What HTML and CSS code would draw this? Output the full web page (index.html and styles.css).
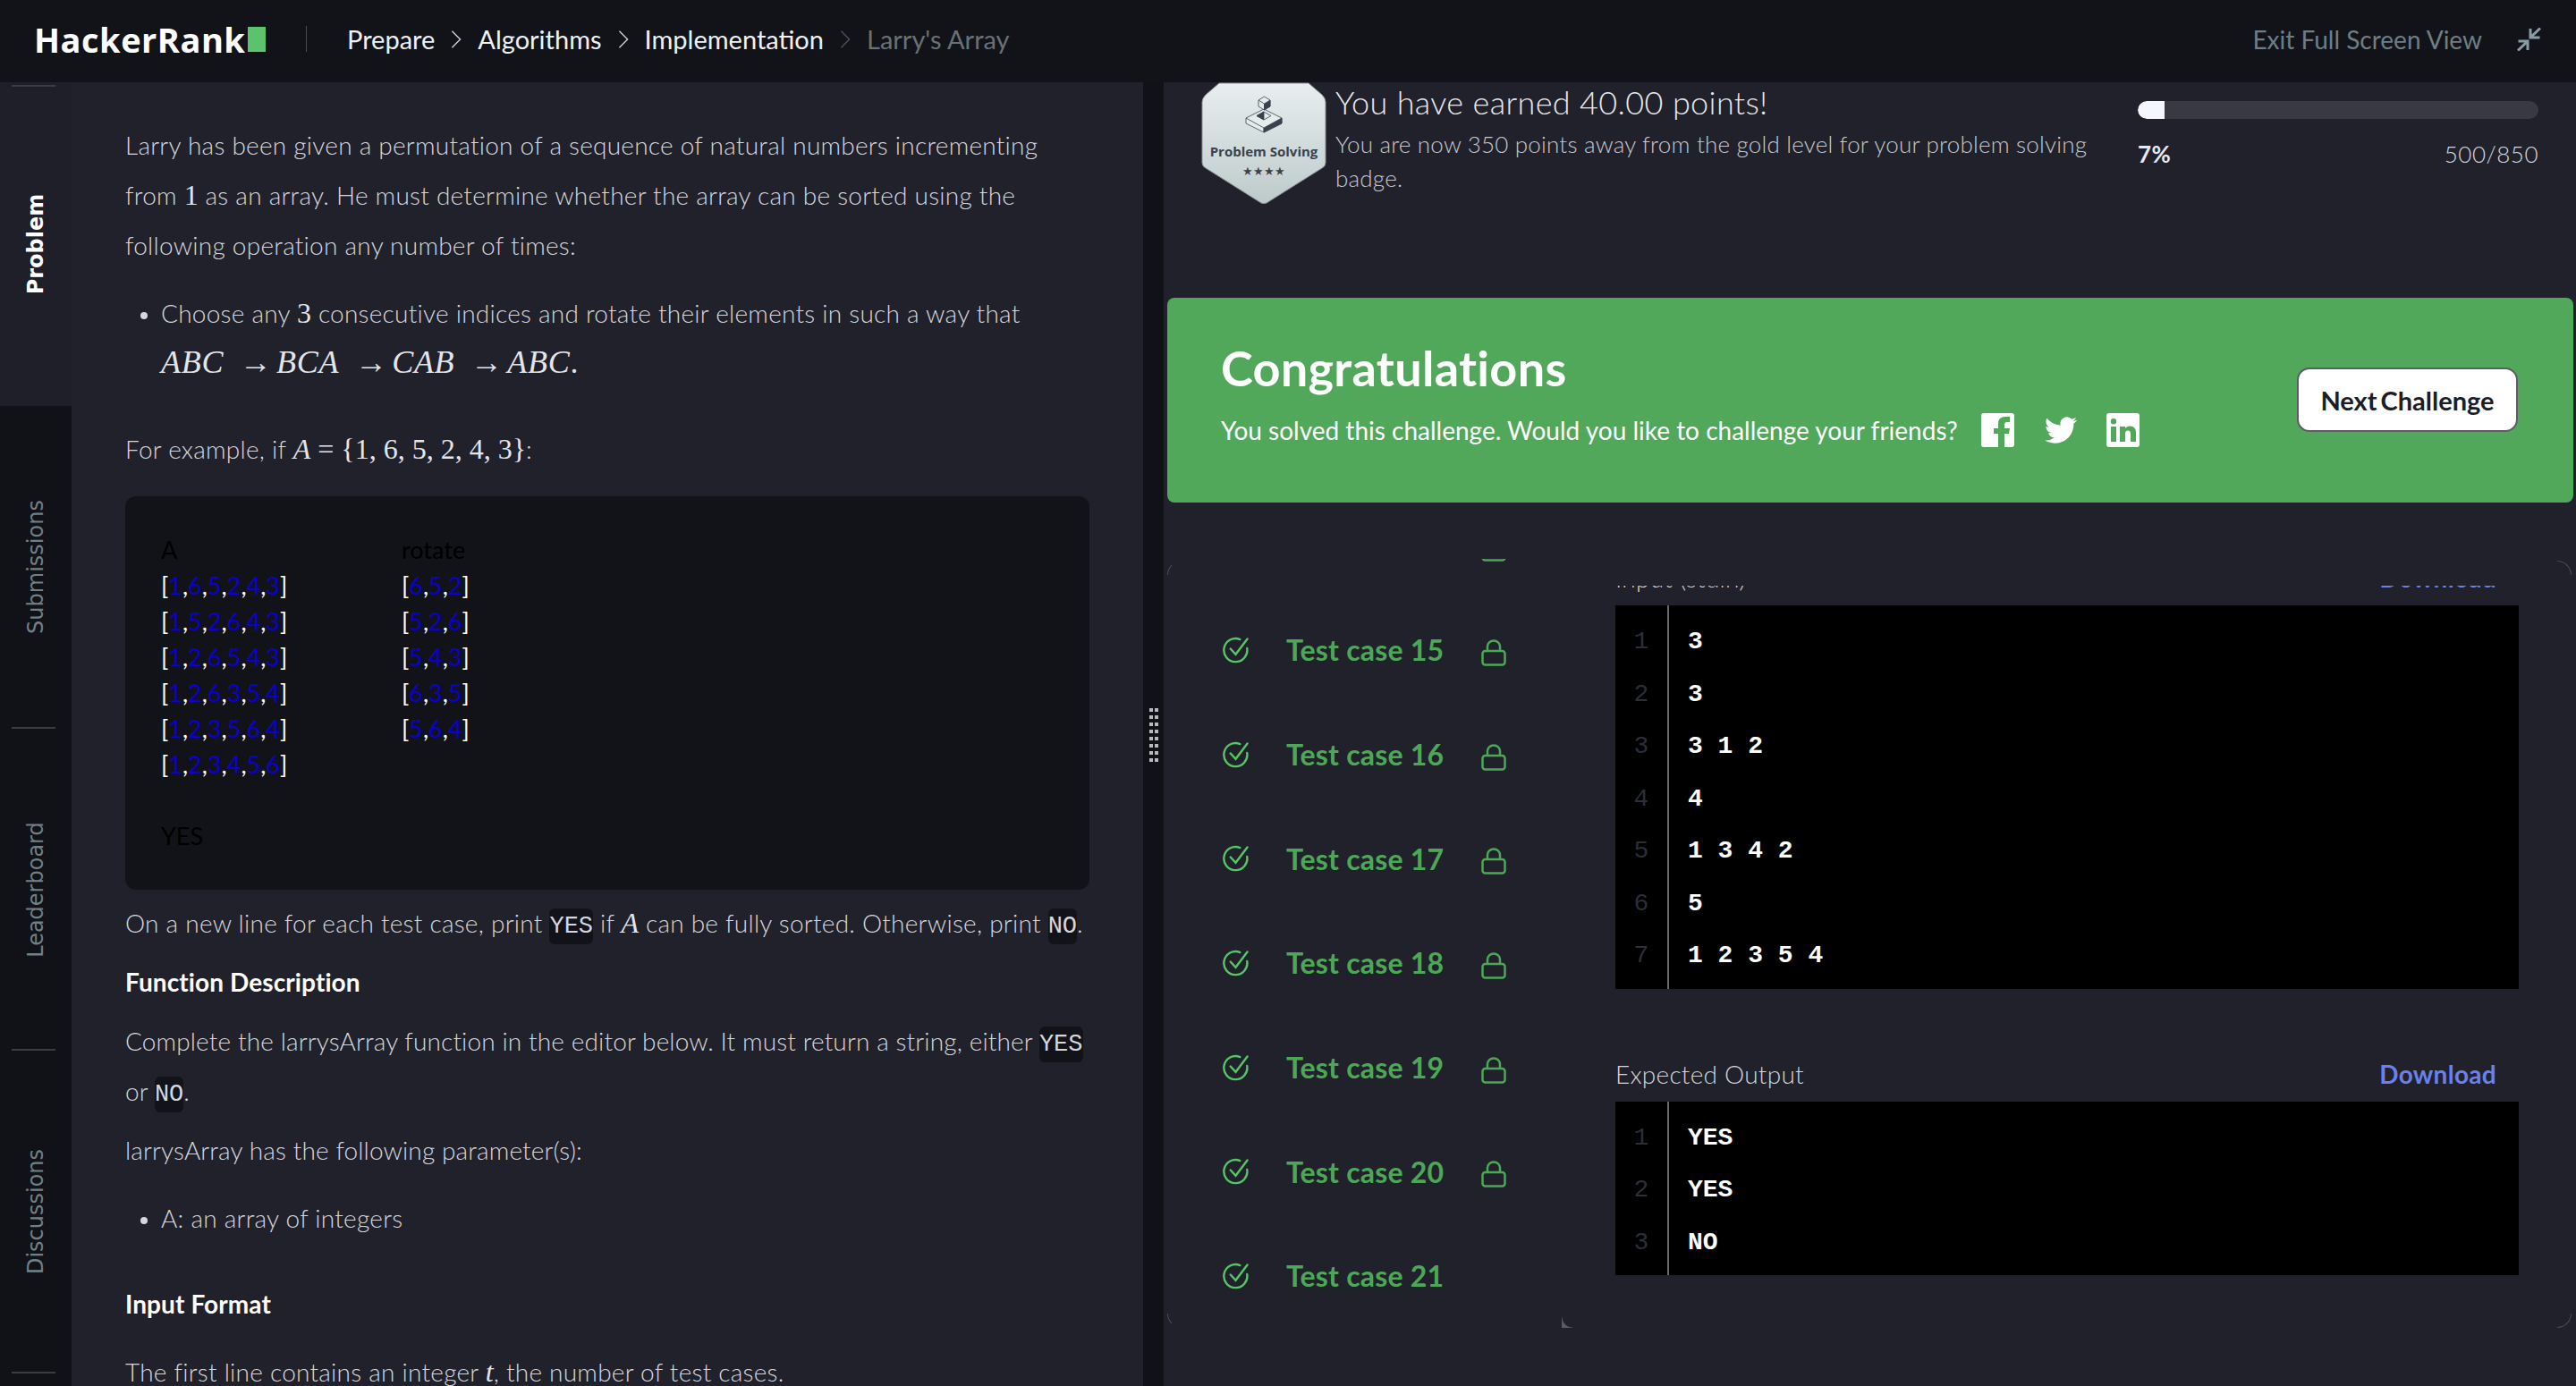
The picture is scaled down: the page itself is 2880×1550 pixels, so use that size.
FILE: index.html
```html
<!DOCTYPE html>
<html lang="en">
<head>
    <meta charset="UTF-8">
    <title>Larry's Array | HackerRank</title>
    <link rel="stylesheet" href="styles.css">
</head>
<body>
    <header class="topbar">
        <div class="logo">HackerRank<span class="logo-block"></span></div>
        <span class="topbar-sep"></span>
        <nav class="crumbs">
            <a>Prepare</a>
            <svg class="chev" viewBox="0 0 12 24"><path d="M1 2l10 10L1 22"/></svg>
            <a>Algorithms</a>
            <svg class="chev" viewBox="0 0 12 24"><path d="M1 2l10 10L1 22"/></svg>
            <a>Implementation</a>
            <svg class="chev dim" viewBox="0 0 12 24"><path d="M1 2l10 10L1 22"/></svg>
            <a class="dim">Larry's Array</a>
        </nav>
        <div class="exit">
            <span>Exit Full Screen View</span>
            <svg viewBox="0 0 27 26"><path d="M26 0.500L15 11M15 1V11H25.500M1 25.500L12 15M1.500 15H12V25"/></svg>
        </div>
    </header>

    <div class="layout">
        <aside class="rail">
            <div class="tab active"><span>Problem</span></div>
            <div class="tab"><span>Submissions</span></div>
            <div class="tab"><span>Leaderboard</span></div>
            <div class="tab"><span>Discussions</span></div>
        </aside>

        <main class="problem">
            <p>Larry has been given a permutation of a sequence of natural numbers incrementing from <span class="math">1</span> as an array. He must determine whether the array can be sorted using the following operation any number of times:</p>
            <ul class="first-list">
                <li>Choose any <span class="math">3</span> consecutive indices and rotate their elements in such a way that<br>
                    <span class="math rot"><i>ABC</i><b>→</b><i>BCA</i><b>→</b><i>CAB</i><b>→</b><i>ABC</i>.</span></li>
            </ul>
            <p class="example">For example, if <span class="math"><i>A</i> = {1, 6, 5, 2, 4, 3}</span>:</p>
            <div class="sample">
                <div class="sample-row"><span class="sample-col">A</span><span>rotate</span></div>
                <div class="sample-row"><span class="sample-col">[<u>1</u>,<u>6</u>,<u>5</u>,<u>2</u>,<u>4</u>,<u>3</u>]</span><span>[<u>6</u>,<u>5</u>,<u>2</u>]</span></div>
                <div class="sample-row"><span class="sample-col">[<u>1</u>,<u>5</u>,<u>2</u>,<u>6</u>,<u>4</u>,<u>3</u>]</span><span>[<u>5</u>,<u>2</u>,<u>6</u>]</span></div>
                <div class="sample-row"><span class="sample-col">[<u>1</u>,<u>2</u>,<u>6</u>,<u>5</u>,<u>4</u>,<u>3</u>]</span><span>[<u>5</u>,<u>4</u>,<u>3</u>]</span></div>
                <div class="sample-row"><span class="sample-col">[<u>1</u>,<u>2</u>,<u>6</u>,<u>3</u>,<u>5</u>,<u>4</u>]</span><span>[<u>6</u>,<u>3</u>,<u>5</u>]</span></div>
                <div class="sample-row"><span class="sample-col">[<u>1</u>,<u>2</u>,<u>3</u>,<u>5</u>,<u>6</u>,<u>4</u>]</span><span>[<u>5</u>,<u>6</u>,<u>4</u>]</span></div>
                <div class="sample-row"><span class="sample-col">[<u>1</u>,<u>2</u>,<u>3</u>,<u>4</u>,<u>5</u>,<u>6</u>]</span></div>
                <div class="sample-row">&nbsp;</div>
                <div class="sample-row">YES</div>
            </div>
            <p class="after-sample">On a new line for each test case, print <code>YES</code> if <span class="math"><i>A</i></span> can be fully sorted. Otherwise, print <code>NO</code>.</p>
            <h4>Function Description</h4>
            <p class="tight">Complete the larrysArray function in the editor below. It must return a string, either <code>YES</code> or <code>NO</code>.</p>
            <p class="tight">larrysArray has the following parameter(s):</p>
            <ul class="second-list">
                <li>A: an array of integers</li>
            </ul>
            <h4 class="format">Input Format</h4>
            <p class="last">The first line contains an integer <span class="math"><i>t</i></span>, the number of test cases.</p>
        </main>

        <div class="divider"><span class="handle"></span></div>

        <section class="result">
            <div class="summary">
                <svg class="badge" viewBox="0 0 140 136">
                    <defs>
                        <linearGradient id="badgeFill" x1="0" y1="0" x2="0" y2="1">
                            <stop offset="0" stop-color="#e9eeef"/>
                            <stop offset="1" stop-color="#bdcaca"/>
                        </linearGradient>
                    </defs>
                    <path d="M20 1H120L135 14Q139 18 139 22V90Q139 94 135 96L73 135Q70 136 67 135L5 96Q1 94 1 90V22Q1 18 5 14Z" fill="url(#badgeFill)" stroke="#8b8f90" stroke-width="1"/>
                    <g stroke="#39424e" stroke-width="0.8" stroke-linejoin="round">
                        <path d="M50 40L70 30L90 40V46L70 56L50 46Z" fill="#e6ebec"/>
                        <path d="M70 51L90 40V46L70 56Z" fill="#39424e"/>
                        <path d="M50 40L70 51V56" fill="none"/>
                        <path d="M70 33L62 37.500L70 42L78 37.500Z" fill="#e6ebec"/>
                        <path d="M70 33L62 37.500L70 42Z" fill="#39424e"/>
                        <path d="M70.500 16L77 20V27L70.500 31L64 27V20Z" fill="#e6ebec"/>
                        <path d="M70.500 24L77 20V27L70.500 31Z" fill="#39424e"/>
                        <path d="M64 20L70.500 24V31" fill="none"/>
                    </g>
                    <text class="badge-name" x="70" y="83">Problem Solving</text>
                    <text class="badge-stars" x="70" y="104">★★★★</text>
                </svg>
                <div class="summary-text">
                    <h2>You have earned 40.00 points!</h2>
                    <p>You are now 350 points away from the gold level for your problem solving badge.</p>
                </div>
                <div class="progress">
                    <div class="track"><div class="fill"></div></div>
                    <div class="progress-labels"><strong>7%</strong><span>500/850</span></div>
                </div>
            </div>

            <div class="banner">
                <div class="banner-text">
                    <h1>Congratulations</h1>
                    <div class="challenge">
                        <span>You solved this challenge. Would you like to challenge your friends?</span>
                        <svg class="social fb" viewBox="0 0 37 38"><path fill-rule="evenodd" d="M3 0H34Q37 0 37 3V35Q37 38 34 38H26V23H31L32 17H26V13Q26 10 29 10H32V4H27Q19 4 19 12V17H14V23H19V38H3Q0 38 0 35V3Q0 0 3 0Z"/></svg>
                        <svg class="social tw" viewBox="0 0 24 24"><path d="M23.95 4.57a10 10 0 0 1-2.82.77 4.96 4.96 0 0 0 2.16-2.72c-.95.55-2 .95-3.12 1.18a4.92 4.92 0 0 0-8.38 4.48C7.69 8.1 4.07 6.13 1.64 3.16a4.82 4.82 0 0 0-.67 2.48c0 1.71.87 3.21 2.19 4.1a4.9 4.9 0 0 1-2.23-.62v.06a4.92 4.92 0 0 0 3.95 4.83 5 5 0 0 1-2.21.08 4.94 4.94 0 0 0 4.6 3.42A9.87 9.87 0 0 1 0 19.54a14 14 0 0 0 7.56 2.21c9.05 0 14-7.5 14-13.98 0-.21 0-.42-.02-.63a9.94 9.94 0 0 0 2.46-2.55z"/></svg>
                        <svg class="social li" viewBox="0 0 37 38"><path fill-rule="evenodd" d="M3 0H34Q37 0 37 3V35Q37 38 34 38H3Q0 38 0 35V3Q0 0 3 0ZM5 15V32H11V15ZM8 6A3.2 3.2 0 1 0 8 12.4A3.2 3.2 0 1 0 8 6ZM15 15V32H21V23Q21 19.500 24 19.500Q27 19.500 27 23V32H33V22Q33 14.500 26.500 14.500Q22.500 14.500 21 17V15Z"/></svg>
                    </div>
                </div>
                <button class="next">Next Challenge</button>
            </div>

            <div class="results">
                <span class="corner tl"></span>
                <span class="corner tr"></span>
                <span class="corner bl"></span>
                <span class="corner br"></span>
                <span class="corner wedge"></span>

                <div class="test-list">
                    <div class="test-row"><svg class="check" viewBox="0 0 30 30"><path d="M20 2.600A13.500 13.500 0 1 0 28.200 13M9 13.500L15 20L28.500 2"/></svg><span class="test-name">Test case 14</span><svg class="lock" viewBox="0 0 28 30"><rect x="1.500" y="13" width="25" height="15.500" rx="3"/><path d="M7 13V8a7 6.500 0 0 1 14 0v5"/></svg></div>
                    <div class="test-row"><svg class="check" viewBox="0 0 30 30"><path d="M20 2.600A13.500 13.500 0 1 0 28.200 13M9 13.500L15 20L28.500 2"/></svg><span class="test-name">Test case 15</span><svg class="lock" viewBox="0 0 28 30"><rect x="1.500" y="13" width="25" height="15.500" rx="3"/><path d="M7 13V8a7 6.500 0 0 1 14 0v5"/></svg></div>
                    <div class="test-row"><svg class="check" viewBox="0 0 30 30"><path d="M20 2.600A13.500 13.500 0 1 0 28.200 13M9 13.500L15 20L28.500 2"/></svg><span class="test-name">Test case 16</span><svg class="lock" viewBox="0 0 28 30"><rect x="1.500" y="13" width="25" height="15.500" rx="3"/><path d="M7 13V8a7 6.500 0 0 1 14 0v5"/></svg></div>
                    <div class="test-row"><svg class="check" viewBox="0 0 30 30"><path d="M20 2.600A13.500 13.500 0 1 0 28.200 13M9 13.500L15 20L28.500 2"/></svg><span class="test-name">Test case 17</span><svg class="lock" viewBox="0 0 28 30"><rect x="1.500" y="13" width="25" height="15.500" rx="3"/><path d="M7 13V8a7 6.500 0 0 1 14 0v5"/></svg></div>
                    <div class="test-row"><svg class="check" viewBox="0 0 30 30"><path d="M20 2.600A13.500 13.500 0 1 0 28.200 13M9 13.500L15 20L28.500 2"/></svg><span class="test-name">Test case 18</span><svg class="lock" viewBox="0 0 28 30"><rect x="1.500" y="13" width="25" height="15.500" rx="3"/><path d="M7 13V8a7 6.500 0 0 1 14 0v5"/></svg></div>
                    <div class="test-row"><svg class="check" viewBox="0 0 30 30"><path d="M20 2.600A13.500 13.500 0 1 0 28.200 13M9 13.500L15 20L28.500 2"/></svg><span class="test-name">Test case 19</span><svg class="lock" viewBox="0 0 28 30"><rect x="1.500" y="13" width="25" height="15.500" rx="3"/><path d="M7 13V8a7 6.500 0 0 1 14 0v5"/></svg></div>
                    <div class="test-row"><svg class="check" viewBox="0 0 30 30"><path d="M20 2.600A13.500 13.500 0 1 0 28.200 13M9 13.500L15 20L28.500 2"/></svg><span class="test-name">Test case 20</span><svg class="lock" viewBox="0 0 28 30"><rect x="1.500" y="13" width="25" height="15.500" rx="3"/><path d="M7 13V8a7 6.500 0 0 1 14 0v5"/></svg></div>
                    <div class="test-row"><svg class="check" viewBox="0 0 30 30"><path d="M20 2.600A13.500 13.500 0 1 0 28.200 13M9 13.500L15 20L28.500 2"/></svg><span class="test-name">Test case 21</span></div>
                </div>

                <div class="test-detail">
                    <div class="detail-scroll">
                        <div class="io-label"><span>Input (stdin)</span><a>Download</a></div>
                        <div class="code-box">
                            <div class="gutter"><div>1</div><div>2</div><div>3</div><div>4</div><div>5</div><div>6</div><div>7</div></div>
                            <div class="code"><div>3</div><div>3</div><div>3 1 2</div><div>4</div><div>1 3 4 2</div><div>5</div><div>1 2 3 5 4</div></div>
                        </div>
                        <div class="io-label output-label"><span>Expected Output</span><a>Download</a></div>
                        <div class="code-box">
                            <div class="gutter"><div>1</div><div>2</div><div>3</div></div>
                            <div class="code"><div>YES</div><div>YES</div><div>NO</div></div>
                        </div>
                    </div>
                </div>
            </div>
        </section>
    </div>
</body>
</html>
```

FILE: styles.css
```css
* {
    box-sizing: border-box;
}

body {
    margin: 0;
    height: 1550px;
    overflow: hidden;
    background: #20212a;
    color: #d6d7de;
    font-family: Lato, "Noto Sans", sans-serif;
    font-size: 28px;
    font-weight: 300;
    letter-spacing: 0.25px;
}

/* top bar */
.topbar {
    display: flex;
    align-items: center;
    height: 92px;
    padding: 0 39px 5px 38px;
    background: #121318;
}

.logo {
    display: flex;
    align-items: center;
    width: 259px;
    color: #fff;
    font-family: "Open Sans", sans-serif;
    font-size: 38px;
    font-weight: 700;
    letter-spacing: 0.5px;
}

.logo-block {
    width: 20px;
    height: 28px;
    margin-left: 3px;
    background: #5cc26d;
}

.topbar-sep {
    width: 1px;
    height: 29px;
    margin: 0 45px;
    background: #4a4b52;
}

.crumbs {
    display: flex;
    align-items: center;
    gap: 18px;
    color: #f0f1f5;
    font-size: 29px;
    font-weight: 400;
    letter-spacing: 0;
}

.crumbs .dim {
    color: #687275;
}

.chev {
    width: 12px;
    height: 22px;
    fill: none;
    stroke: #d0d1d6;
    stroke-width: 1.5;
}

.chev.dim {
    stroke: #4d5356;
}

.exit {
    display: flex;
    align-items: center;
    gap: 39px;
    margin-left: auto;
    color: #6d7f85;
    font-weight: 400;
    letter-spacing: 0;
}

.exit svg {
    width: 27px;
    height: 26px;
    fill: none;
    stroke: #8a9ca3;
    stroke-width: 3;
}

/* main columns */
.layout {
    display: flex;
    height: 1458px;
}

.rail {
    flex: none;
    width: 80px;
    background: #111217;
}

.tab {
    position: relative;
    display: flex;
    align-items: center;
    justify-content: center;
    height: 360.500px;
    color: #6f8186;
    font-family: "DejaVu Sans", sans-serif;
    font-size: 24px;
    font-weight: 400;
    letter-spacing: 0;
}

.tab.active {
    height: 362px;
    background: #1e1f28;
    color: #fff;
    font-weight: 700;
}

.tab.active::before,
.tab:not(.active)::after {
    content: "";
    position: absolute;
    left: 13px;
    width: 49px;
    height: 2px;
    background: #3b3c43;
}

.tab.active::before {
    top: 3px;
}

.tab:not(.active)::after {
    bottom: 0;
}

.tab span {
    transform: rotate(-90deg);
    white-space: nowrap;
}

.problem {
    flex: none;
    width: 1198px;
    padding: 42px 60px 0;
    overflow: hidden;
    background: #20212a;
    line-height: 56px;
}

.problem p {
    margin: 0;
}

.problem h4 {
    margin: 10px 0 0;
    color: #fff;
    font-size: 28px;
    font-weight: 700;
    letter-spacing: 0.1px;
}

.problem ul {
    margin: 20px 0 0;
    padding-left: 40px;
}

.problem li::marker {
    font-size: 24px;
}

.math {
    color: #e4e5ea;
    font-family: "Liberation Serif", serif;
    font-size: 32px;
    font-weight: 400;
    line-height: 1;
    letter-spacing: 0;
}

.rot {
    font-size: 36px;
    letter-spacing: 0.7px;
}

.rot b {
    display: inline-block;
    width: 29px;
    margin: 0 12px 0 18px;
    font-size: 36px;
    font-weight: 400;
    letter-spacing: 0;
    text-align: center;
}

.problem .example {
    margin-top: 40px;
}

.sample {
    height: 440px;
    margin-top: 25px;
    padding: 40px;
    border-radius: 12px;
    background: #121318;
    color: #000;
    font-size: 27px;
    font-weight: 400;
    line-height: 40px;
    letter-spacing: 0;
}

.sample-row {
    display: flex;
    height: 40px;
}

.sample-col {
    width: 269px;
}

.sample-row .sample-col,
.sample-row span {
    color: #000;
}

.sample-row:not(:first-child) span {
    color: #fff;
}

.sample u {
    color: #0a00d0;
    text-decoration: none;
}

.problem .after-sample {
    margin-top: 9px;
}

code {
    padding: 5px 0;
    border-radius: 6px;
    background: #121318;
    color: #d6d7de;
    font-family: "Liberation Mono", monospace;
    font-size: 27px;
    line-height: 1;
    letter-spacing: 0;
}

.problem .tight {
    margin-top: 10px;
    letter-spacing: 0.13px;
}

.problem .format {
    margin-top: 40px;
}

.problem .last {
    margin-top: 20px;
}

.divider {
    display: flex;
    flex: none;
    align-items: flex-start;
    justify-content: center;
    width: 23px;
    padding-top: 700px;
    background: #111217;
}

.handle {
    width: 10px;
    height: 60px;
    background:
        linear-gradient(#b9b9b9 4px, transparent 4px) left top / 4px 8px repeat-y,
        linear-gradient(#b9b9b9 4px, transparent 4px) right top / 4px 8px repeat-y;
}

/* result side */
.result {
    flex: 1;
    min-width: 0;
    background: #20212a;
}

.summary {
    display: flex;
    height: 241px;
    padding-left: 42px;
}

.badge {
    flex: none;
    width: 140px;
    height: 136px;
}

.badge-name {
    fill: #39424e;
    font-family: "Open Sans", sans-serif;
    font-size: 15px;
    font-weight: 700;
    letter-spacing: 0;
    text-anchor: middle;
}

.badge-stars {
    fill: #39424e;
    font-family: "DejaVu Sans", sans-serif;
    font-size: 13px;
    letter-spacing: 0;
    text-anchor: middle;
}

.summary-text {
    flex: none;
    width: 843px;
    margin-left: 10px;
}

.summary-text h2 {
    margin: 0;
    color: #e8e9ef;
    font-size: 36px;
    font-weight: 300;
    line-height: 44px;
    letter-spacing: 0.35px;
}

.summary-text p {
    margin: 6px 0 0;
    color: #c6c7cf;
    font-size: 26px;
    line-height: 38px;
    letter-spacing: 0.2px;
}

.progress {
    flex: none;
    width: 448px;
    margin: 21px 0 0 54px;
}

.track {
    height: 20px;
    overflow: hidden;
    border-radius: 10px;
    background: #383942;
}

.fill {
    width: 30px;
    height: 20px;
    border-radius: 10px 0 0 10px;
    background: #f5f7ff;
}

.progress-labels {
    display: flex;
    justify-content: space-between;
    margin-top: 20px;
    font-size: 26px;
    line-height: 38px;
    letter-spacing: 0.5px;
}

.progress-labels strong {
    color: #e8e9f0;
    font-weight: 700;
}

.banner {
    display: flex;
    justify-content: space-between;
    align-items: flex-start;
    height: 229px;
    margin: 0 3px 0 4px;
    padding: 49px 62px 0 60px;
    border-radius: 8px;
    background: #51a75a;
    color: #fff;
}

.banner h1 {
    margin: 0;
    font-size: 54px;
    font-weight: 700;
    line-height: 60px;
    letter-spacing: 0.3px;
}

.challenge {
    display: flex;
    align-items: center;
    margin-top: 20px;
    font-weight: 400;
    line-height: 38px;
    letter-spacing: 0;
}

.social {
    flex: none;
    fill: #fff;
}

.fb {
    width: 37px;
    height: 38px;
    margin-left: 26px;
}

.tw {
    width: 36px;
    height: 36px;
    margin-left: 34px;
}

.li {
    width: 37px;
    height: 38px;
    margin-left: 33px;
}

.next {
    width: 247px;
    height: 72px;
    margin-top: 29px;
    padding: 0;
    border: 2px solid #5c5d66;
    border-radius: 14px;
    background: #fff;
    color: #1c1d26;
    font-family: inherit;
    font-size: 29px;
    font-weight: 700;
    letter-spacing: 0;
    word-spacing: -3px;
}

.results {
    position: relative;
    display: flex;
    height: 860px;
    margin-top: 63px;
    margin-left: 4px;
    overflow: hidden;
}

.corner {
    position: absolute;
    width: 16px;
    height: 16px;
    border: 0 solid #4a4b53;
}

.corner.tl {
    top: 2px;
    left: 0;
    border-width: 1px 0 0 1px;
    border-top-color: transparent;
    border-radius: 16px 0 0 0;
}

.corner.tr {
    top: 2px;
    right: 5px;
    border-width: 1px 1px 0 0;
    border-radius: 0 16px 0 0;
}

.corner.bl {
    bottom: 0;
    left: 0;
    border-width: 0 0 1px 1px;
    border-bottom-color: transparent;
    border-radius: 0 0 0 16px;
}

.corner.br {
    bottom: 0;
    right: 5px;
    border-width: 0 1px 1px 0;
    border-radius: 0 0 16px 0;
}

.corner.wedge {
    bottom: 0;
    left: 441px;
    width: 12px;
    height: 12px;
    background: radial-gradient(circle at 100% 0, transparent 11px, #5a5b63 12px);
}

.test-list {
    flex: none;
    width: 441px;
    margin-top: -73px;
    padding-left: 62px;
}

.test-row {
    display: flex;
    align-items: center;
    height: 116.670px;
    color: #4ca856;
    font-size: 32px;
    font-weight: 700;
    letter-spacing: 0.2px;
}

.test-name {
    flex: none;
    width: 218px;
    margin-left: 42px;
    white-space: nowrap;
}

.check {
    flex: none;
    width: 29px;
    height: 30px;
    fill: none;
    stroke: #55c566;
    stroke-width: 2.500;
    stroke-linecap: round;
}

.lock {
    flex: none;
    width: 28px;
    height: 30px;
    margin: 6px 0 0 0;
    fill: none;
    stroke: #4ca856;
    stroke-width: 2.500;
}

.test-detail {
    flex: 1;
    min-width: 0;
    padding: 30px 64px 0 60px;
}

.detail-scroll {
    height: 100%;
    overflow: hidden;
}

.io-label {
    display: flex;
    justify-content: space-between;
    height: 54px;
    margin-top: -32px;
    padding-right: 25px;
    color: #d3d4da;
    font-size: 28px;
    line-height: 46px;
}

.io-label a {
    color: #6b80ea;
    font-weight: 700;
    letter-spacing: 0.3px;
}

.output-label {
    margin-top: 72px;
}

.code-box {
    display: flex;
    padding: 12px 0 7px;
    background: #000;
    font-family: "Liberation Mono", monospace;
    font-size: 28px;
    line-height: 58.500px;
    letter-spacing: 0;
}

.gutter {
    flex: none;
    width: 60px;
    margin: -12px 0 -7px;
    padding: 12px 0 7px;
    border-right: 2px solid #6a6a6a;
    color: #2d2e35;
    text-align: center;
}

.code {
    padding-left: 21px;
    color: #fff;
    font-weight: 700;
}
```
